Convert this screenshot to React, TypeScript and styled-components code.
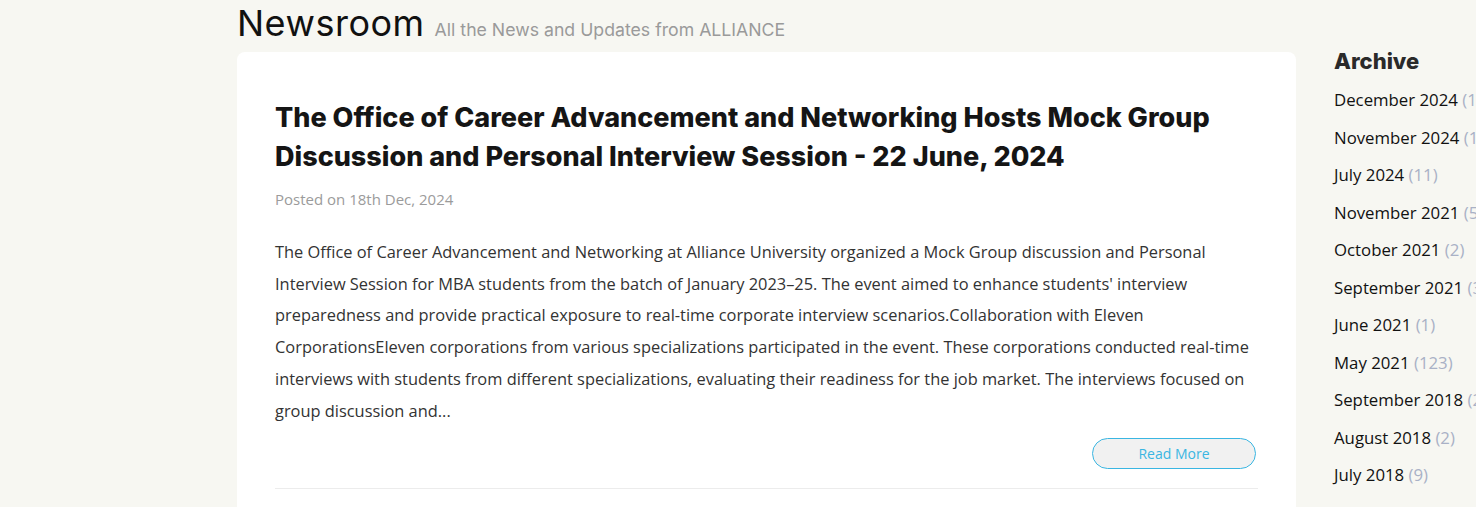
import React from "react";
import styled, { createGlobalStyle } from "styled-components";

const GlobalStyle = createGlobalStyle`
  html, body {
    margin: 0;
    padding: 0;
    background: #f7f7f2;
    overflow: hidden;
  }
  body {
    font-family: "Open Sans", "Noto Sans", sans-serif;
    color: #222;
  }
`;

const Page = styled.div`
  display: grid;
  grid-template-columns: 1059px 260px;
  grid-template-rows: 52px auto;
  align-items: start;
  column-gap: 38px;
  padding-left: 237px;
  width: 1700px;
`;

const Header = styled.header`
  grid-column: 1 / 2;
  display: flex;
  align-items: baseline;
  gap: 10px;
  height: 52px;
`;

const PageTitle = styled.h1`
  margin: 0;
  font-family: "Inter", sans-serif;
  font-weight: 400;
  font-size: 36px;
  line-height: 46px;
  color: #111;
  letter-spacing: 0.5px;
`;

const Tagline = styled.span`
  font-family: "Inter", sans-serif;
  font-size: 17.7px;
  color: #9a9a9a;
`;

const Card = styled.article`
  grid-column: 1 / 2;
  min-height: 620px;
  background: #fff;
  border-radius: 8px;
  padding: 46px 38px 0;
`;

const Title = styled.h2`
  margin: 0;
  font-family: "Inter", sans-serif;
  font-weight: 800;
  font-size: 27px;
  line-height: 39px;
  color: #151515;
`;

const Posted = styled.div`
  margin-top: 13px;
  font-size: 15px;
  color: #9b9b9b;
`;

const Excerpt = styled.p`
  margin: 27px 0 0;
  font-size: 16.4px;
  line-height: 31.7px;
  color: #333;
`;

const Actions = styled.div`
  display: flex;
  justify-content: flex-end;
  padding: 12px 2px 19px 0;
  border-bottom: 1px solid #ececec;
`;

const ReadMore = styled.a`
  display: flex;
  align-items: center;
  justify-content: center;
  width: 162px;
  height: 29px;
  border: 1px solid #3ab6e2;
  border-radius: 16px;
  background: #f1f1f1;
  color: #3ab6e2;
  font-size: 14px;
  text-decoration: none;
`;

const Sidebar = styled.aside`
  grid-column: 2 / 3;
  grid-row: 1 / 3;
  padding-top: 46px;
`;

const SideTitle = styled.h3`
  margin: 0 0 5px;
  font-family: "Inter", sans-serif;
  font-weight: 800;
  font-size: 22px;
  line-height: 30px;
  color: #2a2a2a;
`;

const ArchiveList = styled.ul`
  list-style: none;
  margin: 0;
  padding: 0;
`;

const ArchiveItem = styled.li`
  font-size: 16.8px;
  line-height: 37.5px;
  color: #111;
  white-space: nowrap;
`;

const Count = styled.span`
  color: #a9b1c6;
`;

const archive: [string, number][] = [
  ["December 2024", 1],
  ["November 2024", 1],
  ["July 2024", 11],
  ["November 2021", 5],
  ["October 2021", 2],
  ["September 2021", 3],
  ["June 2021", 1],
  ["May 2021", 123],
  ["September 2018", 2],
  ["August 2018", 2],
  ["July 2018", 9],
  ["June 2018", 7],
];

export default function App() {
  return (
    <>
      <GlobalStyle />
      <Page>
        <Header>
          <PageTitle>Newsroom</PageTitle>
          <Tagline>All the News and Updates from ALLIANCE</Tagline>
        </Header>
        <Card>
          <Title>
            The Office of Career Advancement and Networking Hosts Mock Group
            Discussion and Personal Interview Session - 22 June, 2024
          </Title>
          <Posted>Posted on 18th Dec, 2024</Posted>
          <Excerpt>
            The Office of Career Advancement and Networking at Alliance
            University organized a Mock Group discussion and Personal Interview
            Session for MBA students from the batch of January 2023–25. The
            event aimed to enhance students' interview preparedness and provide
            practical exposure to real-time corporate interview
            scenarios.Collaboration with Eleven CorporationsEleven corporations
            from various specializations participated in the event. These
            corporations conducted real-time interviews with students from
            different specializations, evaluating their readiness for the job
            market. The interviews focused on group discussion and...
          </Excerpt>
          <Actions>
            <ReadMore href="#">Read More</ReadMore>
          </Actions>
        </Card>
        <Sidebar>
          <SideTitle>Archive</SideTitle>
          <ArchiveList>
            {archive.map(([label, n]) => (
              <ArchiveItem key={label}>
                {label} <Count>({n})</Count>
              </ArchiveItem>
            ))}
          </ArchiveList>
        </Sidebar>
      </Page>
    </>
  );
}
